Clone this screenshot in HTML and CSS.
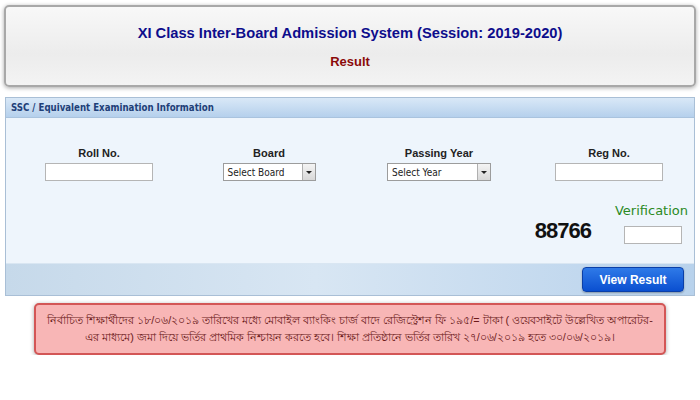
FILE: index.html
```html
<!DOCTYPE html>
<html lang="bn">
<head>
    <meta charset="UTF-8">
    <meta name="viewport" content="width=device-width, initial-scale=1.0">
    <title>XI Class Admission Result</title>
    <link rel="stylesheet" href="styles.css">
</head>
<body>
    <div class="page-header">
        <h1>XI Class Inter-Board Admission System (Session: 2019-2020)</h1>
        <h2>Result</h2>
    </div>

    <div class="panel">
        <div class="panel-title">SSC / Equivalent Examination Information</div>
        <div class="panel-body">
            <div class="fields">
                <div class="field">
                    <label>Roll No.</label>
                    <input type="text" class="text-box">
                </div>
                <div class="field">
                    <label>Board</label>
                    <div class="select-box board">
                        <span>Select Board</span>
                        <span class="arrow"></span>
                    </div>
                </div>
                <div class="field">
                    <label>Passing Year</label>
                    <div class="select-box year">
                        <span>Select Year</span>
                        <span class="arrow"></span>
                    </div>
                </div>
                <div class="field">
                    <label>Reg No.</label>
                    <input type="text" class="text-box">
                </div>
            </div>
            <div class="verify-row">
                <div class="captcha">88766</div>
                <div class="verify">
                    <label>Verification</label>
                    <input type="text" class="verify-box">
                </div>
            </div>
        </div>
        <div class="panel-footer">
            <button class="btn-result">View Result</button>
        </div>
    </div>

    <div class="notice">
        নির্বাচিত শিক্ষার্থীদের ১৮/০৬/২০১৯ তারিখের মধ্যে মোবাইল ব্যাংকিং চার্জ বাদে রেজিস্ট্রেশন ফি ১৯৫/= টাকা ( ওয়েবসাইটে উল্লেখিত অপারেটর-<br>এর মাধ্যমে) জমা দিয়ে ভর্তির প্রাথমিক নিশ্চায়ন করতে হবে। শিক্ষা প্রতিষ্ঠানে ভর্তির তারিখ ২৭/০৬/২০১৯ হতে ৩০/০৬/২০১৯।
    </div>
</body>
</html>
```

FILE: styles.css
```css
body {
    margin: 0;
    padding: 5px 4px 0 4px;
    background: #fff;
    font-family: 'Liberation Sans', Arial, sans-serif;
}

.page-header {
    height: 78px;
    border: 2px solid #a8a8a8;
    border-radius: 5px;
    background: linear-gradient(#f8f8f8, #ececec 60%, #f3f3f3);
    box-shadow: 0 1px 4px rgba(0, 0, 0, 0.35);
    text-align: center;
}

.page-header h1 {
    margin: 18px 0 0 0;
    font-size: 14.7px;
    color: #0d0d8c;
}

.page-header h2 {
    margin: 13px 0 0 0;
    font-size: 13px;
    color: #8b0a0a;
}

.panel {
    margin: 10px 1px 0 1px;
    border: 1px solid #a9bfd6;
    background: #eef5fc;
}

.panel-title {
    height: 19px;
    line-height: 19px;
    padding-left: 5px;
    background: linear-gradient(#d9e8f7, #b5d0ec);
    border-bottom: 1px solid #a9c3de;
    font-family: 'DejaVu Sans Condensed', 'DejaVu Sans', Tahoma, sans-serif;
    font-size: 9.6px;
    font-weight: bold;
    color: #1f3f78;
}

.panel-body {
    height: 145px;
}

.fields {
    display: grid;
    grid-template-columns: repeat(4, 170px);
    padding: 29px 0 0 8px;
}

.field {
    display: flex;
    flex-direction: column;
    align-items: center;
    gap: 4px;
}

.field label {
    font-size: 11px;
    font-weight: bold;
    color: #222;
}

.text-box {
    box-sizing: border-box;
    width: 108px;
    height: 18px;
    margin: 0;
    border: 1px solid #b5b5b5;
    background: #fff;
}

.select-box {
    box-sizing: border-box;
    height: 18px;
    display: flex;
    align-items: center;
    justify-content: space-between;
    border: 1px solid #9c9c9c;
    background: #fff;
    font-family: 'DejaVu Sans Condensed', 'DejaVu Sans', Tahoma, sans-serif;
    font-size: 10px;
    color: #222;
    padding-left: 4px;
}

.select-box.board {
    width: 93px;
}

.select-box.year {
    width: 104px;
}

.arrow {
    width: 12px;
    height: 16px;
    border-left: 1px solid #b0b0b0;
    background: linear-gradient(#f4f4f4, #d8d8d8);
    position: relative;
}

.arrow::after {
    content: '';
    position: absolute;
    left: 3px;
    top: 7px;
    border-left: 3px solid transparent;
    border-right: 3px solid transparent;
    border-top: 3px solid #222;
}

.verify-row {
    display: flex;
    justify-content: flex-end;
    align-items: flex-end;
    padding: 22px 12px 0 0;
}

.captcha {
    font-size: 22px;
    font-weight: bold;
    letter-spacing: -1px;
    color: #111;
    margin: 0 24px 0 0;
}

.verify {
    display: flex;
    flex-direction: column;
    align-items: flex-end;
    gap: 8px;
}

.verify label {
    font-family: 'DejaVu Sans', Tahoma, sans-serif;
    font-size: 13px;
    color: #2b8a1f;
    margin-right: -6px;
}

.verify-box {
    box-sizing: border-box;
    width: 58px;
    height: 18px;
    margin: 0;
    border: 1px solid #b5b5b5;
    background: #fff;
}

.panel-footer {
    height: 31px;
    display: flex;
    justify-content: flex-end;
    align-items: center;
    padding-right: 10px;
    background: linear-gradient(90deg, #c6d9ea, #d8e6f3 45%, #b8d2ec);
    border-top: 1px solid #d9e6f2;
}

.btn-result {
    width: 102px;
    height: 25px;
    border: 1px solid #0a3fa8;
    border-radius: 4px;
    background: linear-gradient(#2f7ae8, #0a4fd0);
    color: #fff;
    font-family: 'Liberation Sans', Arial, sans-serif;
    font-size: 12px;
    font-weight: bold;
    box-shadow: 0 1px 2px rgba(0, 0, 0, 0.3);
}

.notice {
    margin: 7px 30px 0 30px;
    padding: 7px 6px;
    border: 2px solid #d35656;
    border-radius: 5px;
    background: #f8b6b6;
    box-shadow: 0 1px 4px rgba(0, 0, 0, 0.35);
    text-align: center;
    font-size: 10.8px;
    line-height: 17px;
    color: #6b1a1a;
}
```
